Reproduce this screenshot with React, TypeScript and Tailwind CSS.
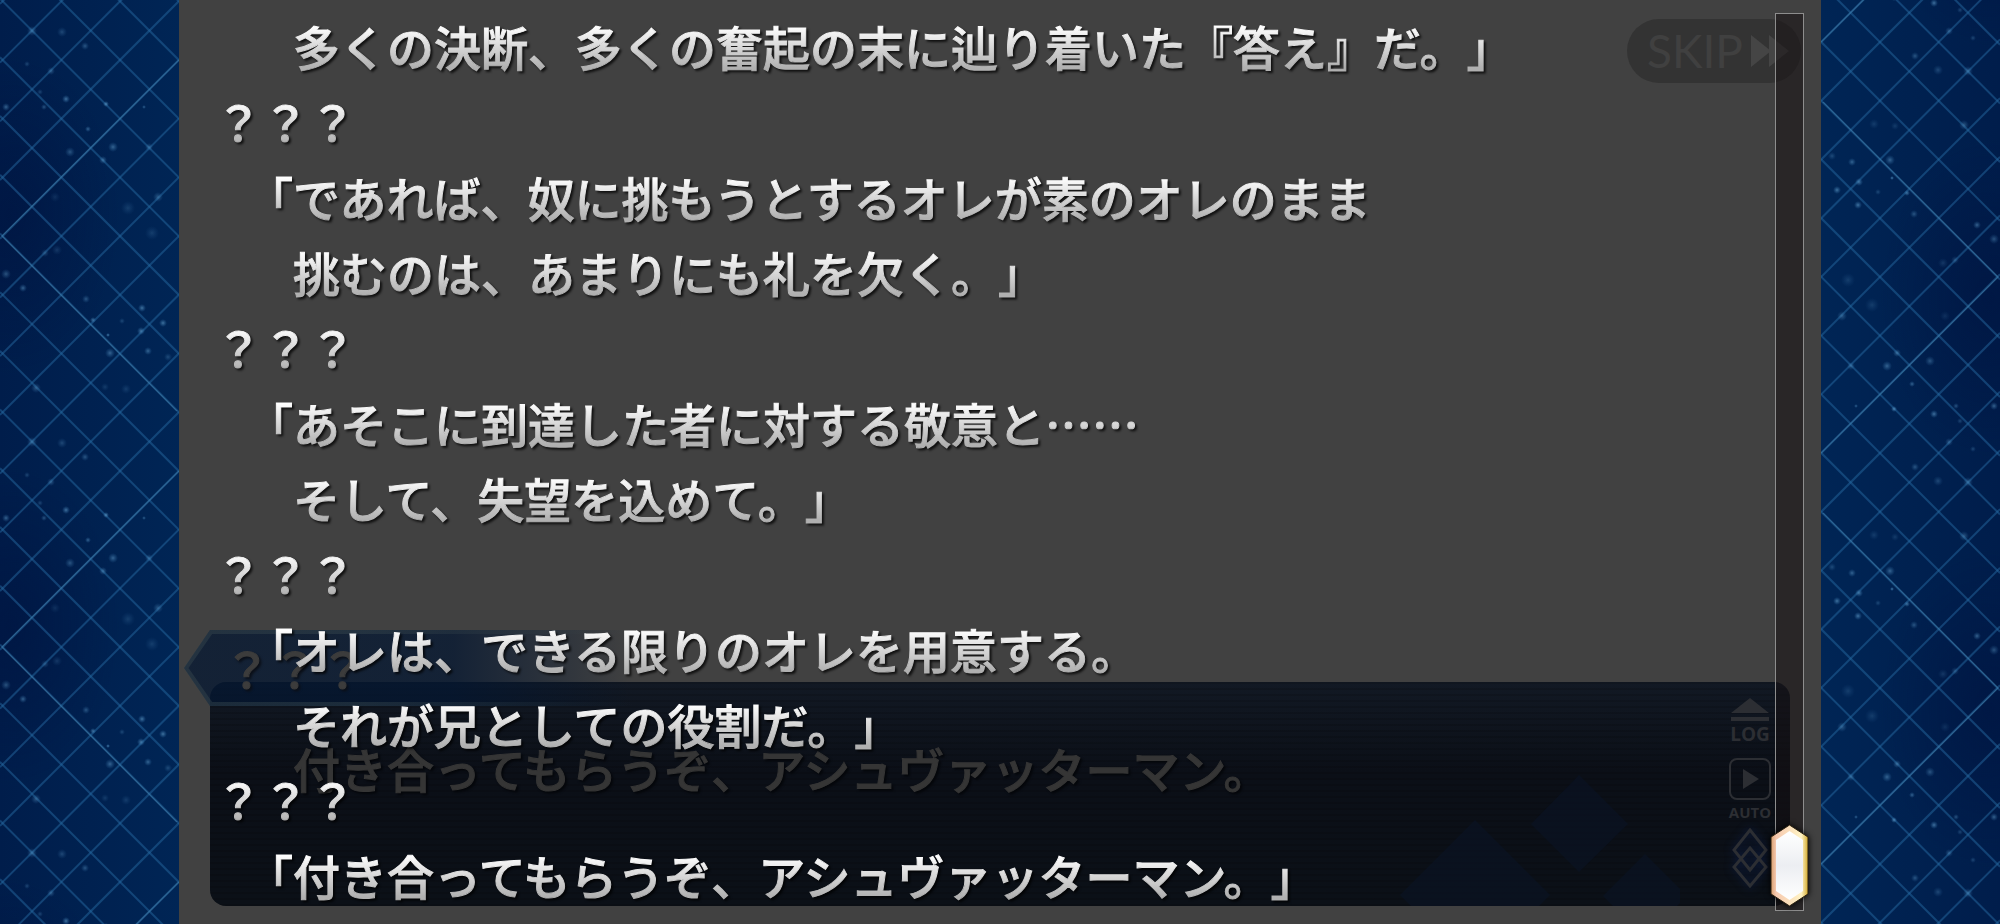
import { useId, useState } from "react";

interface LogEntry {
  speaker?: string;
  lines: string[];
}

const LOG: LogEntry[] = [
  { lines: ["　多くの決断、多くの奮起の末に辿り着いた『答え』だ。」"] },
  {
    speaker: "？？？",
    lines: [
      "「であれば、奴に挑もうとするオレが素のオレのまま",
      "　挑むのは、あまりにも礼を欠く。」",
    ],
  },
  {
    speaker: "？？？",
    lines: ["「あそこに到達した者に対する敬意と……", "　そして、失望を込めて。」"],
  },
  {
    speaker: "？？？",
    lines: ["「オレは、できる限りのオレを用意する。", "　それが兄としての役割だ。」"],
  },
  { speaker: "？？？", lines: ["「付き合ってもらうぞ、アシュヴァッターマン。」"] },
];

// x, y, radius, opacity
const STARS = [
  [32, 31, 4, 0.4],
  [62, 32, 4, 0.3],
  [85, 46, 3, 0.4],
  [51, 71, 3, 0.4],
  [27, 64, 2, 0.3],
  [40, 92, 2, 0.3],
  [66, 99, 3, 0.6],
  [106, 104, 2, 0.7],
  [6, 107, 3, 0.5],
  [44, 107, 2, 0.4],
  [144, 107, 1, 0.5],
  [88, 129, 2, 0.5],
  [113, 147, 4, 0.5],
  [70, 152, 4, 0.4],
  [103, 160, 3, 0.5],
  [149, 147, 3, 0.4],
  [158, 197, 4, 0.4],
  [128, 208, 6, 0.2],
  [55, 197, 4, 0.15],
  [152, 233, 6, 0.2],
  [57, 250, 4, 0.2],
  [45, 253, 3, 0.3],
  [6, 274, 4, 0.4],
  [23, 288, 3, 0.5],
  [86, 299, 3, 0.4],
  [142, 308, 3, 0.6],
  [93, 320, 2, 0.6],
  [163, 323, 3, 0.6],
  [122, 321, 2, 0.3],
  [141, 331, 3, 0.6],
  [108, 335, 1, 0.7],
  [110, 353, 4, 0.5],
  [148, 351, 3, 0.5],
  [168, 357, 3, 0.3],
  [126, 389, 4, 0.2],
  [105, 387, 3, 0.2],
  [36, 388, 4, 0.4],
];

const CELLS = Array.from({ length: 16 }, (_, i) => i - 8);

function LatticePanel({ flipped = false }: { flipped?: boolean }) {
  const id = useId();
  return (
    <div
      className={`w-[179px] shrink-0 bg-linear-to-r from-[#001d4b] to-[#002555] ${flipped ? "rotate-180" : ""}`}
    >
      <svg className="block h-full w-full" aria-hidden="true">
        <defs>
          <radialGradient id={`${id}star`}>
            <stop offset="0" stopColor="#6aa6d2" />
            <stop offset="1" stopColor="#3a7fb8" stopOpacity="0" />
          </radialGradient>
          <radialGradient id={`${id}shade`}>
            <stop offset="0" stopColor="#00103c" stopOpacity="0.45" />
            <stop offset="1" stopColor="#00103c" stopOpacity="0" />
          </radialGradient>
          <pattern id={`${id}tile`} width="179" height="411" patternUnits="userSpaceOnUse">
            <ellipse cx="10" cy="215" rx="110" ry="160" fill={`url(#${id}shade)`} />
            {CELLS.map((k) => {
              const down = 1.4 + 58.71 * k;
              const up = 62.6 + 58.71 * (k + 4);
              return (
                <g key={k} strokeWidth="2" stroke="#23689f" strokeOpacity="0.5">
                  <path d={`M0 ${-down}L179 ${179 - down}`} />
                  <path d={`M0 ${up}L179 ${up - 179}`} />
                </g>
              );
            })}
            <g stroke="#4c8ab5" strokeOpacity="0.45" strokeWidth="1.2" fill="none">
              <path d="M179 60L2 236L179 413" />
            </g>
            {STARS.map(([x, y, r, o]) => (
              <circle key={`${x}-${y}`} cx={x} cy={y} r={r + 1} opacity={o} fill={`url(#${id}star)`} />
            ))}
          </pattern>
        </defs>
        <rect width="100%" height="100%" fill={`url(#${id}tile)`} />
      </svg>
    </div>
  );
}

function SkipButton() {
  return (
    <button
      type="button"
      className="absolute top-[19px] right-5 flex h-16 w-[174px] items-center gap-2 rounded-full bg-[#333333] pl-5 font-['Lato',sans-serif] text-[46px] leading-none font-normal text-[#404040]"
    >
      SKIP
      <svg width="40" height="32" viewBox="0 0 40 32" fill="#454545" aria-hidden="true">
        <path d="M0 0L20 16L0 32ZM18 0L38 16L18 32Z" />
      </svg>
    </button>
  );
}

function NamePlate() {
  return (
    <div className="absolute bottom-[217px] left-1 h-[78px] w-[450px]">
      <svg className="absolute inset-0" width="450" height="78" viewBox="0 0 450 78" aria-hidden="true">
        <defs>
          <linearGradient id="plate" x1="0" x2="1" y1="0" y2="0">
            <stop offset="0.6" stopColor="#031631" stopOpacity="0.73" />
            <stop offset="1" stopColor="#031631" stopOpacity="0" />
          </linearGradient>
          <linearGradient id="plateEdge" x1="0" x2="1" y1="0" y2="0">
            <stop offset="0.4" stopColor="#3c4c50" stopOpacity="0.4" />
            <stop offset="1" stopColor="#3c4c50" stopOpacity="0" />
          </linearGradient>
        </defs>
        <path d="M450 1H27L1 39L27 77H450Z" fill="url(#plate)" />
        <path d="M450 3H28L3 39L28 75H450" fill="none" stroke="url(#plateEdge)" strokeWidth="4" />
      </svg>
      <p className="relative pl-10 text-[48px] leading-[76px] text-[#3c3c3c] [-webkit-text-stroke:1px_#3c3c3c] drop-shadow-[2px_2px_1px_#0a0f18]">
        ？？？
      </p>
    </div>
  );
}

function PanelButtons() {
  return (
    <div className="relative flex w-[42px] flex-col items-center text-[#2c2e33]">
      <button type="button" className="flex flex-col items-center">
        <svg width="40" height="24" viewBox="0 0 40 24" fill="currentColor" aria-hidden="true">
          <path d="M20 0L39 15H1ZM1 19H39V23H1Z" />
        </svg>
        <span className="font-['Open_Sans',sans-serif] text-[19px] leading-6 font-bold">LOG</span>
      </button>
      <button type="button" className="mt-3 flex flex-col items-center">
        <svg width="42" height="42" viewBox="0 0 42 42" aria-hidden="true">
          <rect x="1" y="1" width="40" height="40" rx="7" fill="none" stroke="currentColor" strokeWidth="2" />
          <path d="M14 11L30 21L14 31Z" fill="currentColor" />
        </svg>
        <span className="font-['Open_Sans',sans-serif] text-[15px] leading-6 font-bold">AUTO</span>
      </button>
      <button type="button" aria-label="メニュー" className="mt-1">
        <svg
          width="42"
          height="60"
          viewBox="0 0 42 60"
          fill="none"
          stroke="currentColor"
          strokeWidth="3"
          className="drop-shadow-[0_0_4px_#0c1c44]"
        >
          <path d="M21 2L37 22L21 42L5 22Z" />
          <path d="M21 20L37 39L21 58L5 39Z" />
        </svg>
      </button>
    </div>
  );
}

function MessageWindow() {
  return (
    <div className="absolute inset-x-[31px] bottom-[18px] flex h-[224px] justify-between overflow-hidden rounded-2xl bg-linear-to-b from-[#121924] via-[#0b0f17] via-40% to-[#0b1017] pt-4 pr-[19px]">
      <div className="absolute inset-0 bg-[repeating-linear-gradient(to_bottom,#00000022_0px,#00000022_2px,transparent_2px,transparent_6px)]" />
      <svg
        className="absolute right-[110px] bottom-0"
        width="280"
        height="136"
        viewBox="0 0 280 136"
        fill="#0a1428"
        fillOpacity="0.5"
        aria-hidden="true"
      >
        <path d="M75 50L150 125L139 136H11L0 125Z" />
        <path d="M179 5L228 54L179 102L131 54Z" />
        <path d="M245 84L287 126L277 136H213L203 126Z" />
      </svg>
      <p className="relative pt-8 pl-[83px] text-[47px] leading-[75px] text-[#353535] [-webkit-text-stroke:1px_#353535] drop-shadow-[2px_2px_1px_#04060a]">
        付き合ってもらうぞ、アシュヴァッターマン。
      </p>
      <PanelButtons />
    </div>
  );
}

const LINE_TEXT =
  "block bg-linear-to-b from-[#ffffff] from-25% to-[#b0b0b0] to-80% bg-clip-text text-transparent [-webkit-text-stroke:1px_transparent] whitespace-pre";

function LogView() {
  return (
    <ol className="relative pt-2 pl-9 text-[47px] drop-shadow-[2px_2px_1px_rgba(0,0,0,0.75)]">
      {LOG.map((entry, i) => (
        <li key={i}>
          {entry.speaker && <p className={`${LINE_TEXT} leading-[76px]`}>{entry.speaker}</p>}
          {entry.lines.map((line) => (
            <p key={line} className={`${LINE_TEXT} pl-[31px] leading-[75px]`}>
              {line}
            </p>
          ))}
        </li>
      ))}
    </ol>
  );
}

function LogScrollbar() {
  const [value, setValue] = useState(100);
  return (
    <div className="absolute top-[13px] right-[17px] bottom-[13px] w-[29px] border border-[#8d8d8d] bg-[#151113]/55">
      <div className="absolute inset-x-[-8px] top-1 bottom-[-2px]">
        <div className="absolute inset-x-0 h-[88px] -translate-y-full" style={{ top: `${value}%` }}>
          <svg
            width="43"
            height="88"
            viewBox="0 0 43 88"
            className="drop-shadow-[0_0_3px_#000000]"
            aria-hidden="true"
          >
            <defs>
              <linearGradient id="gem" x1="0" x2="1" y1="0" y2="0">
                <stop offset="0" stopColor="#d9a06f" />
                <stop offset="0.14" stopColor="#f6c9b0" />
                <stop offset="0.82" stopColor="#fff3c4" />
                <stop offset="1" stopColor="#d2a92e" />
              </linearGradient>
              <linearGradient id="gemFace" x1="0" x2="0" y1="0" y2="1">
                <stop offset="0" stopColor="#ffffff" />
                <stop offset="0.5" stopColor="#eceef2" />
                <stop offset="1" stopColor="#ffffff" />
              </linearGradient>
            </defs>
            <path d="M21.5 1L40 13V70L21.5 82L3 70V13Z" fill="url(#gem)" stroke="#2a2010" strokeWidth="1" />
            <path d="M21.5 7L35 16V67L21.5 76L8 67V16Z" fill="url(#gemFace)" />
          </svg>
        </div>
      </div>
      <input
        type="range"
        aria-label="ログのスクロール"
        value={value}
        onChange={(e) => setValue(Number(e.target.value))}
        className="absolute inset-0 h-full w-full cursor-pointer opacity-0 [writing-mode:vertical-lr]"
      />
    </div>
  );
}

export default function App() {
  return (
    <div
      lang="ja"
      className="flex h-screen overflow-hidden bg-[#414141] font-['Noto_Sans_CJK_JP',sans-serif] font-medium [text-spacing-trim:space-all]"
    >
      <LatticePanel />
      <main className="relative min-w-0 flex-1">
        <SkipButton />
        <MessageWindow />
        <NamePlate />
        <LogView />
        <LogScrollbar />
      </main>
      <LatticePanel flipped />
    </div>
  );
}
